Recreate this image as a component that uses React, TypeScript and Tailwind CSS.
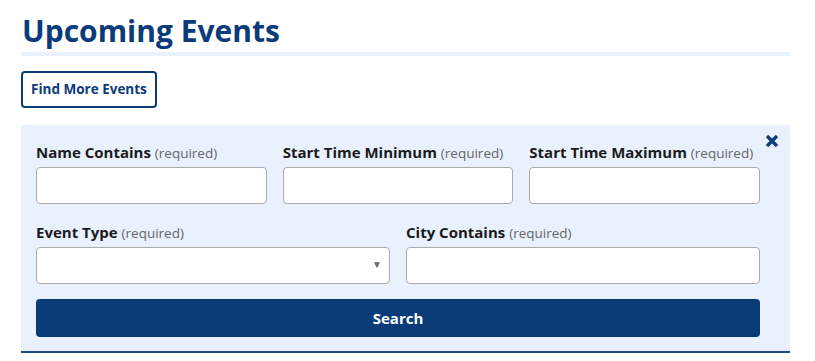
function Label({ text }: { text: string }) {
  return (
    <label className="mb-[5px] block h-5 text-[15px] leading-5 font-bold whitespace-nowrap text-[#1b1b1b]">
      {text} <span className="text-[13.5px] font-normal text-[#666]">(required)</span>
    </label>
  )
}

function Field({ text }: { text: string }) {
  return (
    <div className="flex flex-col">
      <Label text={text} />
      <input
        type="text"
        className="h-[37px] w-full rounded-[4px] border border-[#aaaaaa] bg-white px-2 text-[14px] outline-none"
      />
    </div>
  )
}

export default function App() {
  return (
    <div className="min-h-[361px] bg-white pt-[13px] pl-[21px] font-['Open_Sans',sans-serif]">
      <div className="w-[769px]">
        <h1 className="pl-px text-[30px] leading-9 font-bold text-[#0b3b78]">Upcoming Events</h1>
        <div className="mt-[3px] h-1 bg-[#e8f1fd]" />

        <button className="mt-[15px] h-[37px] rounded-[4px] border-2 border-[#0b3b78] bg-white px-[8px] text-[13.5px] font-bold text-[#0b3b78]">
          Find More Events
        </button>

        <div className="relative mt-[17px] border-b-2 border-[#1e4a80] bg-[#e8f1fd] pt-[17px] pr-[30px] pb-[14px] pl-[15px]">
          <button className="absolute top-[9px] right-[11px] p-0 text-[#0b3b78]" aria-label="Close">
            <svg width="14" height="14" viewBox="0 0 14 14">
              <path d="M2 2 L12 12 M12 2 L2 12" stroke="currentColor" strokeWidth="3.2" strokeLinecap="butt" />
            </svg>
          </button>

          <div className="grid grid-cols-3 gap-x-4">
            <Field text="Name Contains" />
            <Field text="Start Time Minimum" />
            <Field text="Start Time Maximum" />
          </div>

          <div className="mt-[18px] grid grid-cols-2 gap-x-4">
            <div className="flex flex-col">
              <Label text="Event Type" />
              <div className="relative h-[37px] rounded-[4px] border border-[#aaaaaa] bg-white">
                <span className="absolute top-[11px] right-[7px] text-[10px] leading-none text-[#6b6b6b]">▼</span>
              </div>
            </div>
            <Field text="City Contains" />
          </div>

          <button className="mt-[15px] h-[38px] w-full rounded-[4px] bg-[#083b78] text-[15px] font-bold text-white">
            Search
          </button>
        </div>
      </div>
    </div>
  )
}
